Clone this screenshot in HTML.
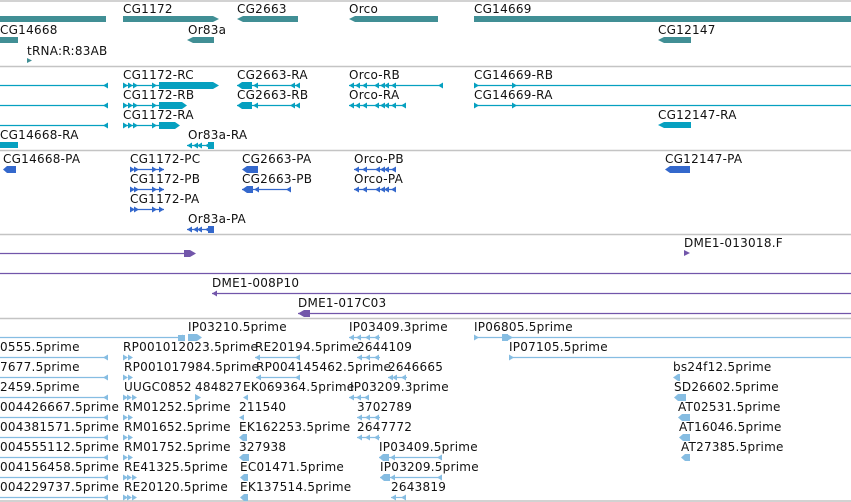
<!DOCTYPE html>
<html><head><meta charset="utf-8"><style>
html,body{margin:0;padding:0;background:#fff;width:851px;height:502px;overflow:hidden}
svg text{font-family:"DejaVu Sans","Liberation Sans",sans-serif;font-size:12px;fill:#111;letter-spacing:0.25px}
</style></head><body>
<svg width="851" height="502" viewBox="0 0 851 502" xmlns="http://www.w3.org/2000/svg">
<defs>
<polygon id="L" points="0,0 5,-3 5,3"/>
<polygon id="R" points="0,0 -5,-3 -5,3"/>
</defs>
<g fill="none" stroke="#c4c4c4" stroke-width="1.5">
<line x1="0" y1="1" x2="851" y2="1"/><line x1="0" y1="66.5" x2="851" y2="66.5"/>
<line x1="0" y1="150.5" x2="851" y2="150.5"/><line x1="0" y1="234.5" x2="851" y2="234.5"/>
<line x1="0" y1="318.5" x2="851" y2="318.5"/><line x1="0" y1="501" x2="851" y2="501"/>
</g>
<g fill="#418f95">
<rect x="0" y="16" width="106" height="6"/>
<polygon points="123,16 213,16 219,19 213,22 123,22"/>
<polygon points="237,19 243,16 298,16 298,22 243,22"/>
<polygon points="349,19 355,16 438,16 438,22 355,22"/>
<rect x="474" y="16" width="377" height="6"/>
<rect x="0" y="37" width="18" height="6"/>
<polygon points="187,40 193,37 214,37 214,43 193,43"/>
<polygon points="658,40 664,37 691,37 691,43 664,43"/>
<polygon points="27,58 32,60.5 27,63"/>
</g>
<text x="123" y="13">CG1172</text><text x="237" y="13">CG2663</text><text x="349" y="13">Orco</text><text x="474" y="13">CG14669</text>
<text x="0" y="34">CG14668</text><text x="188" y="34">Or83a</text><text x="658" y="34">CG12147</text>
<text x="27" y="55">tRNA:R:83AB</text>
<g fill="#06a0c0" stroke="#06a0c0">
<g stroke-width="1.2">
<line x1="0" y1="85.5" x2="108" y2="85.5"/><line x1="0" y1="105.5" x2="108" y2="105.5"/><line x1="0" y1="125.5" x2="108" y2="125.5"/>
<line x1="123" y1="85.5" x2="160" y2="85.5"/><line x1="123" y1="105.5" x2="160" y2="105.5"/><line x1="123" y1="125.5" x2="160" y2="125.5"/>
<line x1="237" y1="85.5" x2="300" y2="85.5"/><line x1="237" y1="105.5" x2="300" y2="105.5"/>
<line x1="349" y1="85.5" x2="443" y2="85.5"/><line x1="349" y1="105.5" x2="406" y2="105.5"/>
<line x1="474" y1="85.5" x2="851" y2="85.5"/><line x1="474" y1="105.5" x2="851" y2="105.5"/>
<line x1="187" y1="145.5" x2="214" y2="145.5"/>
</g>
<g stroke="none">
<use href="#L" x="103" y="85.5"/><use href="#L" x="103" y="105.5"/><use href="#L" x="103" y="125.5"/>
<g id="cgr"><use href="#R" x="128" y="85.5"/><use href="#R" x="133" y="85.5"/><use href="#R" x="138" y="85.5"/><use href="#R" x="157" y="85.5"/></g>
<use href="#cgr" y="20"/><use href="#cgr" y="40"/>
<polygon points="159,82 213,82 219,85.5 213,89 159,89"/>
<polygon points="159,102 182,102 187,105.5 182,109 159,109"/>
<polygon points="159,122 175,122 180,125.5 175,129 159,129"/>
<polygon points="237,85.5 242,82 252,82 252,89 242,89"/><use href="#L" x="253" y="85.5"/><use href="#L" x="290" y="85.5"/><use href="#L" x="295" y="85.5"/>
<polygon points="237,105.5 242,102 252,102 252,109 242,109"/><use href="#L" x="253" y="105.5"/><use href="#L" x="290" y="105.5"/><use href="#L" x="295" y="105.5"/>
<g id="orc"><use href="#L" x="349" y="85.5"/><use href="#L" x="355" y="85.5"/><use href="#L" x="362" y="85.5"/><use href="#L" x="374" y="85.5"/><use href="#L" x="380" y="85.5"/><use href="#L" x="384" y="85.5"/><use href="#L" x="391" y="85.5"/></g>
<use href="#orc" y="20"/><use href="#L" x="401" y="105.5"/>
<use href="#L" x="438" y="85.5"/>
<use href="#R" x="479" y="85.5"/><use href="#R" x="517" y="85.5"/><use href="#R" x="479" y="105.5"/><use href="#R" x="517" y="105.5"/>
<polygon points="658,125 664,122 691,122 691,128 664,128"/>
<rect x="0" y="142" width="18" height="6"/>
<use href="#L" x="187" y="145.5"/><use href="#L" x="193" y="145.5"/><use href="#L" x="197" y="145.5"/><use href="#L" x="205" y="145.5"/><rect x="208" y="142" width="6" height="7"/>
</g></g>
<text x="123" y="79">CG1172-RC</text><text x="237" y="79">CG2663-RA</text><text x="349" y="79">Orco-RB</text><text x="474" y="79">CG14669-RB</text>
<text x="123" y="99">CG1172-RB</text><text x="237" y="99">CG2663-RB</text><text x="349" y="99">Orco-RA</text><text x="474" y="99">CG14669-RA</text>
<text x="123" y="119">CG1172-RA</text><text x="658" y="119">CG12147-RA</text>
<text x="0" y="139">CG14668-RA</text><text x="188" y="139">Or83a-RA</text>
<g fill="#3468cc" stroke="#3468cc">
<g stroke-width="1.2">
<line x1="130" y1="169.5" x2="164" y2="169.5"/><line x1="130" y1="189.5" x2="164" y2="189.5"/><line x1="130" y1="209.5" x2="164" y2="209.5"/>
<line x1="242" y1="189.5" x2="291" y2="189.5"/><line x1="354" y1="169.5" x2="396" y2="169.5"/><line x1="354" y1="189.5" x2="396" y2="189.5"/>
<line x1="187" y1="229.5" x2="214" y2="229.5"/>
</g>
<g stroke="none">
<polygon points="3,169.5 7,166 16,166 16,173 7,173"/>
<g id="cgp"><use href="#R" x="135" y="169.5"/><use href="#R" x="139" y="169.5"/><use href="#R" x="157" y="169.5"/><use href="#R" x="164" y="169.5"/></g>
<use href="#cgp" y="20"/><use href="#cgp" y="40"/>
<polygon points="242,169.5 247,166 258,166 258,173 247,173"/>
<polygon points="242,189.5 247,186 253,186 253,193 247,193"/><use href="#L" x="254" y="189.5"/><use href="#L" x="286" y="189.5"/>
<g id="orp"><use href="#L" x="354" y="169.5"/><use href="#L" x="362" y="169.5"/><use href="#L" x="375" y="169.5"/><use href="#L" x="380" y="169.5"/><use href="#L" x="384" y="169.5"/><use href="#L" x="391" y="169.5"/></g>
<use href="#orp" y="20"/>
<polygon points="665,169.5 670,166 690,166 690,173 670,173"/>
<use href="#L" x="187" y="229.5"/><use href="#L" x="193" y="229.5"/><use href="#L" x="197" y="229.5"/><use href="#L" x="205" y="229.5"/><rect x="208" y="226" width="6" height="7"/>
</g></g>
<text x="3" y="163">CG14668-PA</text><text x="130" y="163">CG1172-PC</text><text x="242" y="163">CG2663-PA</text><text x="354" y="163">Orco-PB</text><text x="665" y="163">CG12147-PA</text>
<text x="130" y="183">CG1172-PB</text><text x="242" y="183">CG2663-PB</text><text x="354" y="183">Orco-PA</text>
<text x="130" y="203">CG1172-PA</text><text x="188" y="223">Or83a-PA</text>
<g fill="#7256aa" stroke="#7256aa">
<g stroke-width="1.2"><line x1="0" y1="253.5" x2="190" y2="253.5"/><line x1="0" y1="273.5" x2="851" y2="273.5"/><line x1="212" y1="293.5" x2="851" y2="293.5"/><line x1="298" y1="313.5" x2="851" y2="313.5"/></g>
<g stroke="none"><polygon points="184,250 190,250 196,253.5 190,257 184,257"/><polygon points="684,250 690,253 684,256"/>
<use href="#L" x="212" y="293.5"/><polygon points="298,313.5 304,310 310,310 310,317 304,317"/></g></g>
<text x="684" y="247">DME1-013018.F</text><text x="212" y="287">DME1-008P10</text><text x="298" y="307">DME1-017C03</text>
<g fill="#86bde2" stroke="#86bde2">
<g stroke-width="1.2">
<line x1="0" y1="337.5" x2="183" y2="337.5"/><line x1="474" y1="337.5" x2="851" y2="337.5"/><line x1="349" y1="337.5" x2="380" y2="337.5"/>
<line x1="0" y1="357.5" x2="108" y2="357.5"/><line x1="255" y1="357.5" x2="300" y2="357.5"/><line x1="357" y1="357.5" x2="380" y2="357.5"/><line x1="509" y1="357.5" x2="851" y2="357.5"/>
<line x1="0" y1="377.5" x2="108" y2="377.5"/><line x1="256" y1="377.5" x2="300" y2="377.5"/><line x1="388" y1="377.5" x2="407" y2="377.5"/>
<line x1="0" y1="397.5" x2="108" y2="397.5"/><line x1="349" y1="397.5" x2="369" y2="397.5"/>
<line x1="0" y1="417.5" x2="108" y2="417.5"/><line x1="357" y1="417.5" x2="380" y2="417.5"/>
<line x1="0" y1="437.5" x2="108" y2="437.5"/><line x1="357" y1="437.5" x2="380" y2="437.5"/>
<line x1="0" y1="457.5" x2="108" y2="457.5"/><line x1="379" y1="457.5" x2="442" y2="457.5"/>
<line x1="0" y1="477.5" x2="108" y2="477.5"/><line x1="380" y1="477.5" x2="442" y2="477.5"/>
<line x1="0" y1="497.5" x2="108" y2="497.5"/><line x1="391" y1="497.5" x2="406" y2="497.5"/>
</g>
<g stroke="none">
<use href="#L" x="178" y="337.5"/><rect x="178" y="335" width="7" height="6"/><polygon points="188,334 197,334 202,337.5 197,341 188,341"/>
<use href="#L" x="349" y="337.5"/><use href="#L" x="356" y="337.5"/><use href="#L" x="365" y="337.5"/><use href="#L" x="374" y="337.5"/>
<use href="#R" x="479" y="337.5"/><polygon points="507,334 513,337.5 507,341"/><rect x="502" y="334" width="6" height="7"/>
<use href="#L" x="103" y="357.5"/><use href="#R" x="128" y="357.5"/><use href="#R" x="133" y="357.5"/><use href="#L" x="255" y="357.5"/><use href="#L" x="295" y="357.5"/>
<use href="#L" x="357" y="357.5"/><use href="#L" x="365" y="357.5"/><use href="#L" x="374" y="357.5"/><use href="#R" x="514" y="357.5"/>
<use href="#L" x="103" y="377.5"/><use href="#R" x="128" y="377.5"/><use href="#R" x="133" y="377.5"/><use href="#L" x="256" y="377.5"/><use href="#L" x="295" y="377.5"/>
<use href="#L" x="388" y="377.5"/><use href="#L" x="392" y="377.5"/><use href="#L" x="401" y="377.5"/><polygon points="673,377.5 678,374 680,374 680,381 678,381"/>
<use href="#L" x="103" y="397.5"/><use href="#R" x="128" y="397.5"/><use href="#R" x="132" y="397.5"/><use href="#R" x="137" y="397.5"/><polygon points="195,394 201,397.5 195,401"/><use href="#L" x="243" y="397.5"/>
<use href="#L" x="349" y="397.5"/><use href="#L" x="356" y="397.5"/><use href="#L" x="364" y="397.5"/><polygon points="674,397.5 678,394 686,394 686,401 678,401"/>
<use href="#L" x="103" y="417.5"/><use href="#R" x="128" y="417.5"/><use href="#R" x="133" y="417.5"/><use href="#L" x="239" y="417.5"/>
<use href="#L" x="357" y="417.5"/><use href="#L" x="365" y="417.5"/><use href="#L" x="374" y="417.5"/><polygon points="678,417.5 682,414 690,414 690,421 682,421"/>
<use href="#L" x="103" y="437.5"/><use href="#R" x="128" y="437.5"/><use href="#R" x="133" y="437.5"/><polygon points="239,437.5 243,434 247,434 247,441 243,441"/>
<use href="#L" x="357" y="437.5"/><use href="#L" x="365" y="437.5"/><use href="#L" x="374" y="437.5"/><polygon points="679,437.5 683,434 690,434 690,441 683,441"/>
<use href="#L" x="103" y="457.5"/><use href="#R" x="128" y="457.5"/><use href="#R" x="133" y="457.5"/><polygon points="239,457.5 243,454 249,454 249,461 243,461"/>
<polygon points="379,457.5 383,454 389,454 389,461 383,461"/><use href="#L" x="390" y="457.5"/><use href="#L" x="437" y="457.5"/><polygon points="681,457.5 685,454 690,454 690,461 685,461"/>
<use href="#L" x="103" y="477.5"/><use href="#R" x="128" y="477.5"/><use href="#R" x="132" y="477.5"/><use href="#R" x="137" y="477.5"/><polygon points="240,477.5 244,474 248,474 248,481 244,481"/>
<polygon points="380,477.5 384,474 390,474 390,481 384,481"/><use href="#L" x="390" y="477.5"/><use href="#L" x="437" y="477.5"/>
<use href="#L" x="103" y="497.5"/><use href="#R" x="128" y="497.5"/><use href="#R" x="132" y="497.5"/><use href="#R" x="137" y="497.5"/><polygon points="240,497.5 244,494 248,494 248,501 244,501"/>
<use href="#L" x="391" y="497.5"/><use href="#L" x="401" y="497.5"/>
</g></g>
<text x="188" y="331">IP03210.5prime</text><text x="349" y="331">IP03409.3prime</text><text x="474" y="331">IP06805.5prime</text>
<text x="0" y="351">0555.5prime</text><text x="123" y="351">RP001012023.5prime</text><text x="255" y="351">RE20194.5prime</text><text x="357" y="351">2644109</text><text x="509" y="351">IP07105.5prime</text>
<text x="0" y="371">7677.5prime</text><text x="124" y="371">RP001017984.5prime</text><text x="256" y="371">RP004145462.5prime</text><text x="388" y="371">2646665</text><text x="673" y="371">bs24f12.5prime</text>
<text x="0" y="391">2459.5prime</text><text x="124" y="391">UUGC0852</text><text x="195" y="391">484827</text><text x="243" y="391">EK069364.5prime</text><text x="350" y="391">IP03209.3prime</text><text x="674" y="391">SD26602.5prime</text>
<text x="0" y="411">004426667.5prime</text><text x="124" y="411">RM01252.5prime</text><text x="239" y="411">211540</text><text x="357" y="411">3702789</text><text x="678" y="411">AT02531.5prime</text>
<text x="0" y="431">004381571.5prime</text><text x="124" y="431">RM01652.5prime</text><text x="239" y="431">EK162253.5prime</text><text x="357" y="431">2647772</text><text x="679" y="431">AT16046.5prime</text>
<text x="0" y="451">004555112.5prime</text><text x="124" y="451">RM01752.5prime</text><text x="239" y="451">327938</text><text x="379" y="451">IP03409.5prime</text><text x="681" y="451">AT27385.5prime</text>
<text x="0" y="471">004156458.5prime</text><text x="124" y="471">RE41325.5prime</text><text x="240" y="471">EC01471.5prime</text><text x="380" y="471">IP03209.5prime</text>
<text x="0" y="491">004229737.5prime</text><text x="124" y="491">RE20120.5prime</text><text x="240" y="491">EK137514.5prime</text><text x="391" y="491">2643819</text>
</svg>
</body></html>
